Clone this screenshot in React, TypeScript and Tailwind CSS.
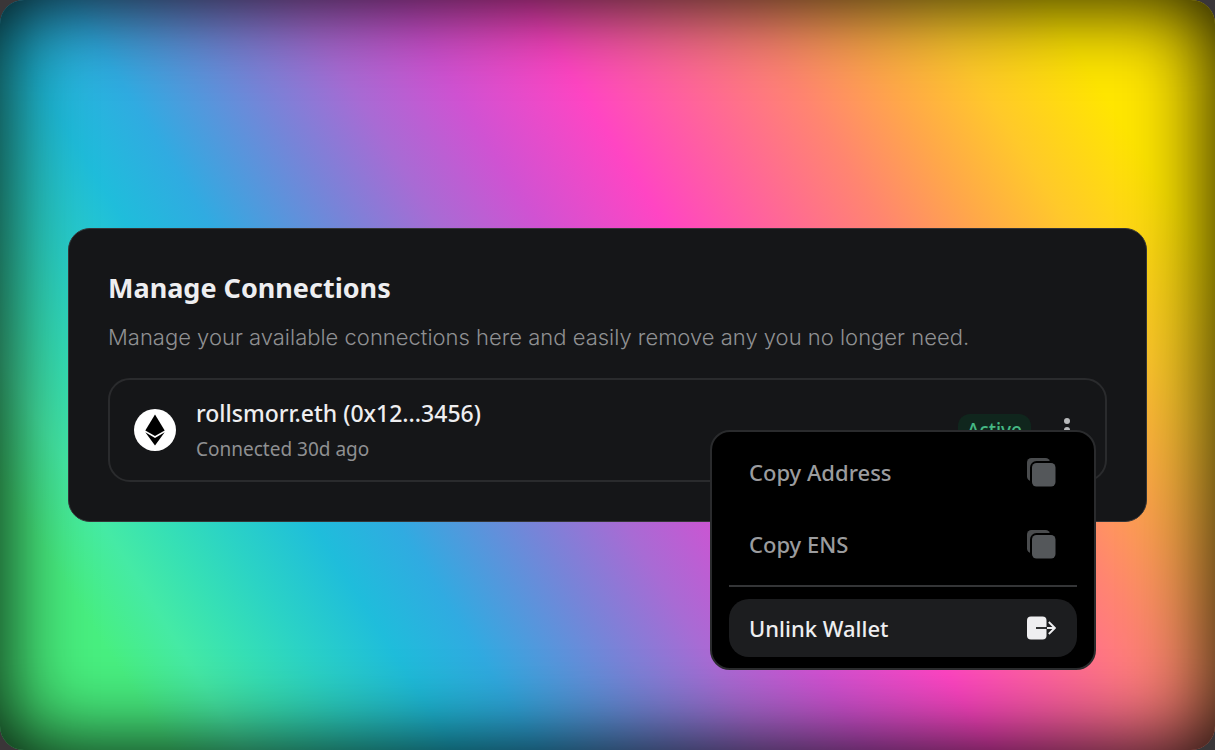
import React from "react";

function EthereumIcon() {
  return (
    <svg viewBox="0 0 42 42" className="size-[42px] shrink-0" role="img" aria-label="Ethereum">
      <circle cx="21" cy="21" r="21" fill="#fff" />
      <path d="M21 5.5 30.7 21.5 21 27 11.3 21.5Z" fill="#000" />
      <path d="m11.3 23.2 9.7 5.7 9.7-5.7L21 36.5Z" fill="#000" />
    </svg>
  );
}

function CopyIcon() {
  return (
    <svg viewBox="0 0 30 30" className="size-[30px] shrink-0" aria-hidden="true">
      <rect x="1" y="1" width="23" height="23" rx="4.5" fill="#4a4c4e" />
      <rect x="6" y="6" width="23.5" height="23.5" rx="4.5" fill="#54575a" stroke="#000" strokeWidth="4" paintOrder="stroke" />
    </svg>
  );
}

function UnlinkIcon() {
  return (
    <svg viewBox="0 0 30 30" className="size-[30px] shrink-0" aria-hidden="true">
      <rect x="1" y="3.5" width="19.5" height="23" rx="4" fill="#eeeef0" />
      <path d="M10 15h11.5" stroke="#1c1d1f" strokeWidth="1.8" />
      <path d="M21 15h8M22.8 9l6 6-6 6" fill="none" stroke="#eeeef0" strokeWidth="1.9" />
    </svg>
  );
}

const itemClass = "flex h-[58px] w-full items-center justify-between rounded-[20px] pr-[21px] pl-5 text-left text-[22px] font-medium";

function ConnectionMenu() {
  return (
    <div
      role="menu"
      aria-label="Connection actions"
      className="absolute top-[50px] right-[9px] z-10 w-[386px] rounded-[20px] border-2 border-[#2a2b2d] bg-black px-[17px] py-[11px]"
    >
      <button type="button" role="menuitem" className={`${itemClass} text-[#9b9c9e]`}>
        Copy Address
        <CopyIcon />
      </button>
      <button type="button" role="menuitem" className={`${itemClass} mt-[14px] text-[#9b9c9e]`}>
        Copy ENS
        <CopyIcon />
      </button>
      <hr className="mt-3 mb-3 border-t-2 border-[#343537]" />
      <button type="button" role="menuitem" className={`${itemClass} bg-[#1c1d1f] text-[#eeeef0]`}>
        Unlink Wallet
        <UnlinkIcon />
      </button>
    </div>
  );
}

export default function App() {
  return (
    <div className="min-h-screen bg-[#3a3638] font-['Noto_Sans',sans-serif]">
      <main className="flex min-h-screen items-center rounded-[24px] bg-[linear-gradient(58deg,#48ef76_0%,#48ef80_10%,#45eaa5_14.5%,#36e0b5_18%,#2bd3c5_21.5%,#1fbddb_27%,#30abe1_32%,#7784d8_40%,#a86bd4_45.5%,#d052d2_51.5%,#ff45c3_59%,#ff8570_72%,#ffa74a_77.5%,#ffc92a_83%,#ffe600_90%,#ffe600_100%)] px-[68px] shadow-[inset_0_0_84px_rgba(0,0,0,1)]">
        <section className="w-full rounded-[22px] border border-[#343537] bg-[#151618] px-[39px] py-[39px]">
          <h1 className="text-[27px] leading-10 font-bold text-[#eeeef0]">Manage Connections</h1>
          <p className="mt-[13px] font-['Inter','Noto_Sans',sans-serif] text-[22px] leading-8 font-light text-[#8f9092]">
            Manage your available connections here and easily remove any you no longer need.
          </p>
          <div className="relative mt-[25px] flex h-[104px] items-center rounded-[22px] border-2 border-[#2a2b2d] pr-[26px] pl-6">
            <EthereumIcon />
            <div className="ml-5 pt-[2px]">
              <h2 className="text-[23px] leading-9 font-medium text-[#eeeef0]">rollsmorr.eth (0x12...3456)</h2>
              <p className="text-[19px] leading-9 text-[#8f9092]">Connected 30d ago</p>
            </div>
            <span className="ml-auto rounded-[12px] bg-[#10261d] px-[9px] text-[19px] leading-8 font-medium text-[#45b884]">
              Active
            </span>
            <button type="button" aria-label="Open connection menu" className="ml-6 flex w-6 justify-center">
              <svg viewBox="0 0 6 24" className="h-6 w-[6px]" fill="#b8b9bb" aria-hidden="true">
                <circle cx="3" cy="3" r="3" />
                <circle cx="3" cy="12" r="3" />
                <circle cx="3" cy="21" r="3" />
              </svg>
            </button>
            <ConnectionMenu />
          </div>
        </section>
      </main>
    </div>
  );
}
